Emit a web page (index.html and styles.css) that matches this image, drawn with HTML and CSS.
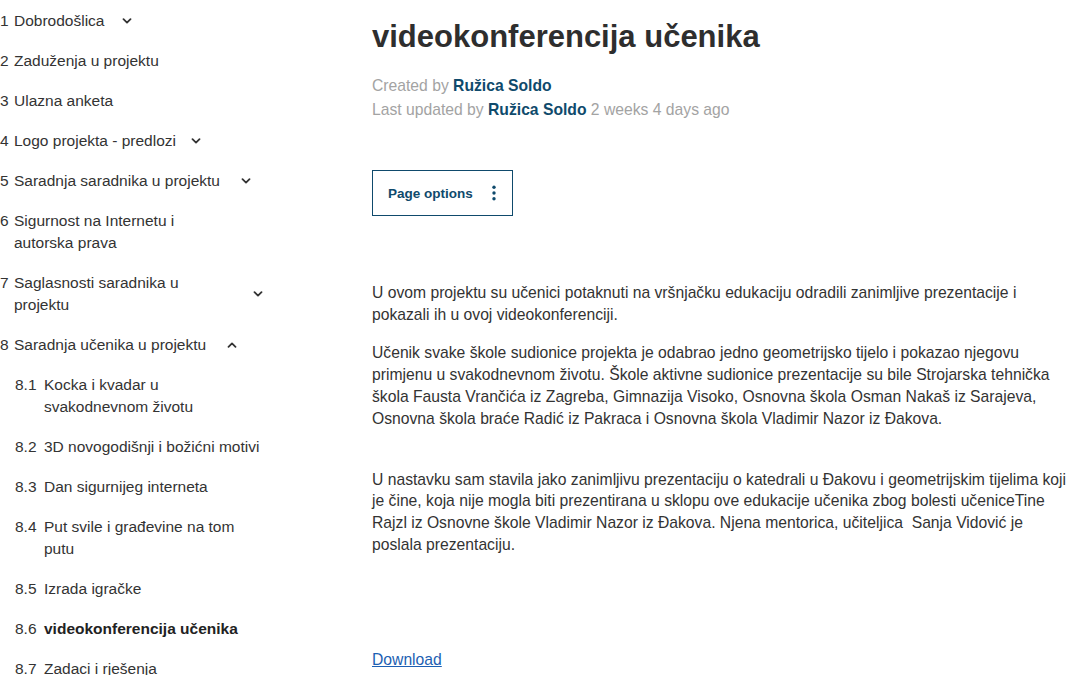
FILE: index.html
```html
<!DOCTYPE html>
<html lang="hr">
<head>
<meta charset="utf-8">
<title>videokonferencija učenika</title>
<link rel="stylesheet" href="styles.css">
</head>
<body>
<div class="layout">
  <nav class="tree">
    <ul class="level">
      <li><div class="row"><span class="num">1</span><span class="text">Dobrodošlica</span><svg class="chev" width="10" height="6" viewBox="0 0 10 6"><path d="M1.5 1.2 L5 4.6 L8.5 1.2"/></svg></div></li>
      <li><div class="row"><span class="num">2</span><span class="text">Zaduženja u projektu</span></div></li>
      <li><div class="row"><span class="num">3</span><span class="text">Ulazna anketa</span></div></li>
      <li><div class="row"><span class="num">4</span><span class="text">Logo projekta - predlozi</span><svg class="chev chev-narrow" width="10" height="6" viewBox="0 0 10 6"><path d="M1.5 1.2 L5 4.6 L8.5 1.2"/></svg></div></li>
      <li><div class="row"><span class="num">5</span><span class="text">Saradnja saradnika u projektu</span><svg class="chev chev-wide" width="10" height="6" viewBox="0 0 10 6"><path d="M1.5 1.2 L5 4.6 L8.5 1.2"/></svg></div></li>
      <li><div class="row"><span class="num">6</span><span class="text">Sigurnost na Internetu i<br>autorska prava</span></div></li>
      <li><div class="row"><span class="num">7</span><span class="text text-fixed">Saglasnosti saradnika u<br>projektu</span><svg class="chev" width="10" height="6" viewBox="0 0 10 6"><path d="M1.5 1.2 L5 4.6 L8.5 1.2"/></svg></div></li>
      <li>
        <div class="row"><span class="num">8</span><span class="text">Saradnja učenika u projektu</span><svg class="chev chev-wide" width="10" height="6" viewBox="0 0 10 6"><path d="M1.5 4.8 L5 1.4 L8.5 4.8"/></svg></div>
        <ul class="level sub">
          <li><div class="row"><span class="num">8.1</span><span class="text">Kocka i kvadar u<br>svakodnevnom životu</span></div></li>
          <li><div class="row"><span class="num">8.2</span><span class="text">3D novogodišnji i božićni motivi</span></div></li>
          <li><div class="row"><span class="num">8.3</span><span class="text">Dan sigurnijeg interneta</span></div></li>
          <li><div class="row"><span class="num">8.4</span><span class="text">Put svile i građevine na tom<br>putu</span></div></li>
          <li><div class="row"><span class="num">8.5</span><span class="text">Izrada igračke</span></div></li>
          <li><div class="row current"><span class="num">8.6</span><span class="text">videokonferencija učenika</span></div></li>
          <li><div class="row"><span class="num">8.7</span><span class="text">Zadaci i rješenja</span></div></li>
        </ul>
      </li>
    </ul>
  </nav>
  <main class="content">
    <h1 class="title">videokonferencija učenika</h1>
    <div class="meta">
      <div>Created by <a class="author" href="#">Ružica Soldo</a></div>
      <div>Last updated by <a class="author" href="#">Ružica Soldo</a> 2 weeks 4 days ago</div>
    </div>
    <button class="page-options" type="button">
      <span>Page options</span>
      <svg class="kebab" width="4" height="16" viewBox="0 0 4 16"><circle cx="2" cy="2.2" r="1.7"/><circle cx="2" cy="8" r="1.7"/><circle cx="2" cy="13.8" r="1.7"/></svg>
    </button>
    <div class="body">
      <p class="p1">U ovom projektu su učenici potaknuti na vršnjačku edukaciju odradili zanimljive prezentacije i<br>pokazali ih u ovoj videokonferenciji.</p>
      <p class="p2">Učenik svake škole sudionice projekta je odabrao jedno geometrijsko tijelo i pokazao njegovu<br>primjenu u svakodnevnom životu. Škole aktivne sudionice prezentacije su bile Strojarska tehnička<br>škola Fausta Vrančića iz Zagreba, Gimnazija Visoko, Osnovna škola Osman Nakaš iz Sarajeva,<br>Osnovna škola braće Radić iz Pakraca i Osnovna škola Vladimir Nazor iz Đakova.</p>
      <p class="p3">U nastavku sam stavila jako zanimljivu prezentaciju o katedrali u Đakovu i geometrijskim tijelima koji<br>je čine, koja nije mogla biti prezentirana u sklopu ove edukacije učenika zbog bolesti učeniceTine<br>Rajzl iz Osnovne škole Vladimir Nazor iz Đakova. Njena mentorica, učiteljica&nbsp; Sanja Vidović je<br>poslala prezentaciju.</p>
      <p class="download"><a href="#">Download</a></p>
    </div>
  </main>
</div>
</body>
</html>
```

FILE: styles.css
```css
html, body {
  margin: 0;
  padding: 0;
  background: #ffffff;
}

body {
  font-family: "Liberation Sans", Arial, sans-serif;
  font-size: 15.7px;
  color: #333333;
  overflow: hidden;
}

.layout {
  display: grid;
  grid-template-columns: 300px 1fr;
  width: 1080px;
  height: 675px;
}

/* ---------- page tree ---------- */
.tree {
  padding-top: 1px;
  font-size: 15.5px;
}

.level {
  list-style: none;
  margin: 0;
  padding: 0;
}

.row {
  display: flex;
  align-items: flex-start;
  padding: 9px 0;
  line-height: 22px;
  color: #333333;
}

.num {
  flex: none;
  min-width: 14px;
}

.text {
  flex: 0 1 auto;
}

.text-fixed {
  width: 221px;
}

.chev {
  flex: none;
  align-self: center;
  margin-left: 18px;
}

.chev-narrow {
  margin-left: 15px;
}

.chev-wide {
  margin-left: 21px;
}

.chev path {
  fill: none;
  stroke: #333333;
  stroke-width: 1.8;
  stroke-linecap: round;
  stroke-linejoin: round;
}

.sub {
  padding-left: 15px;
}

.sub .num {
  min-width: 29px;
}

.current .text {
  font-weight: bold;
  color: #222222;
}

/* ---------- content ---------- */
.content {
  padding-left: 72px;
  padding-right: 0;
}

.title {
  margin: 19px 0 0;
  font-size: 31px;
  line-height: 36px;
  font-weight: bold;
  color: #2e2e2e;
}

.meta {
  margin-top: 19px;
  line-height: 24px;
  color: #a3a3a3;
}

.author {
  color: #0f4a6c;
  font-weight: bold;
  text-decoration: none;
}

.page-options {
  display: flex;
  align-items: center;
  gap: 19px;
  margin-top: 48px;
  height: 46px;
  padding: 0 16px 0 15px;
  background: #ffffff;
  border: 1px solid #0f4a6c;
  border-radius: 0;
  font-family: "Liberation Sans", Arial, sans-serif;
  font-size: 13.5px;
  font-weight: bold;
  color: #0f4a6c;
  cursor: pointer;
}

.kebab circle {
  fill: #0f4a6c;
}

.body p {
  margin: 0;
  line-height: 21.7px;
  white-space: nowrap;
}

.body .p1 {
  margin-top: 66px;
}

.body .p2 {
  margin-top: 17px;
}

.body .p3 {
  margin-top: 39.5px;
}

.body .download {
  margin-top: 93.5px;
}

.download a {
  color: #1d5fb3;
  text-decoration: underline;
}
```
